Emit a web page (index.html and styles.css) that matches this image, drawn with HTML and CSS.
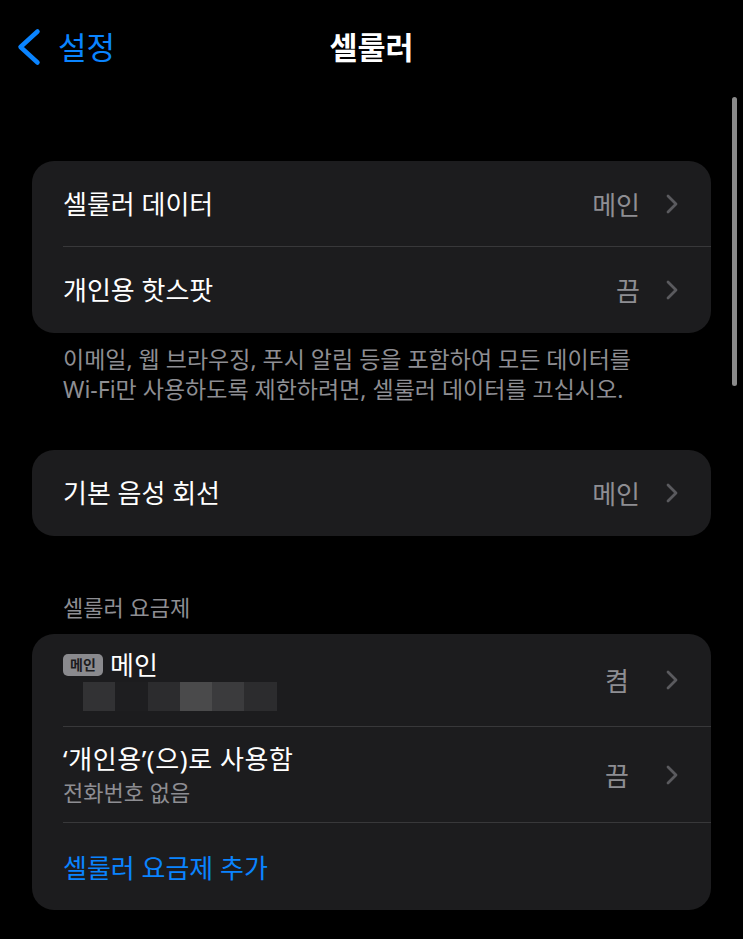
FILE: index.html
```html
<!DOCTYPE html>
<html lang="ko">
<head>
    <meta charset="UTF-8">
    <meta name="viewport" content="width=device-width, initial-scale=1.0">
    <title>셀룰러</title>
    <link rel="stylesheet" href="styles.css">
</head>
<body>
    <div class="screen">
        <header class="nav">
            <a class="back" href="#">
                <svg width="26" height="40" viewBox="0 0 26 40"><polyline points="21.5,4.5 4.5,20 21.5,35.5" fill="none" stroke="#0a84ff" stroke-width="4.5" stroke-linecap="round" stroke-linejoin="round"/></svg>
                <span>설정</span>
            </a>
            <h1 class="title">셀룰러</h1>
            <div></div>
        </header>

        <div class="scrollbar"></div>

        <main class="content">
            <section class="group first">
                <div class="row">
                    <div class="row-body">
                        <span class="label">셀룰러 데이터</span>
                        <span class="value">메인</span>
                        <svg class="chev" width="12" height="20" viewBox="0 0 12 20"><polyline points="2,2 10,10 2,18" fill="none" stroke="#5a5a5e" stroke-width="2.8" stroke-linecap="round" stroke-linejoin="round"/></svg>
                    </div>
                </div>
                <div class="row">
                    <div class="row-body">
                        <span class="label">개인용 핫스팟</span>
                        <span class="value">끔</span>
                        <svg class="chev" width="12" height="20" viewBox="0 0 12 20"><polyline points="2,2 10,10 2,18" fill="none" stroke="#5a5a5e" stroke-width="2.8" stroke-linecap="round" stroke-linejoin="round"/></svg>
                    </div>
                </div>
            </section>
            <p class="footnote">이메일, 웹 브라우징, 푸시 알림 등을 포함하여 모든 데이터를<br>Wi-Fi만 사용하도록 제한하려면, 셀룰러 데이터를 끄십시오.</p>

            <section class="group second">
                <div class="row">
                    <div class="row-body">
                        <span class="label">기본 음성 회선</span>
                        <span class="value">메인</span>
                        <svg class="chev" width="12" height="20" viewBox="0 0 12 20"><polyline points="2,2 10,10 2,18" fill="none" stroke="#5a5a5e" stroke-width="2.8" stroke-linecap="round" stroke-linejoin="round"/></svg>
                    </div>
                </div>
            </section>

            <h2 class="section-title">셀룰러 요금제</h2>
            <section class="group plans">
                <div class="row">
                    <div class="row-body plan">
                        <div class="stack">
                            <div class="plan-name"><span class="badge">메인</span><span class="label">메인</span></div>
                            <div class="redacted">
                                <i class="px1"></i><i class="px2"></i><i class="px3"></i><i class="px4"></i><i class="px5"></i><i class="px3"></i>
                            </div>
                        </div>
                        <span class="value">켬</span>
                        <svg class="chev" width="12" height="20" viewBox="0 0 12 20"><polyline points="2,2 10,10 2,18" fill="none" stroke="#5a5a5e" stroke-width="2.8" stroke-linecap="round" stroke-linejoin="round"/></svg>
                    </div>
                </div>
                <div class="row">
                    <div class="row-body personal">
                        <div class="stack">
                            <span class="label wide">‘개인용’(으)로 사용함</span>
                            <span class="sub">전화번호 없음</span>
                        </div>
                        <span class="value">끔</span>
                        <svg class="chev" width="12" height="20" viewBox="0 0 12 20"><polyline points="2,2 10,10 2,18" fill="none" stroke="#5a5a5e" stroke-width="2.8" stroke-linecap="round" stroke-linejoin="round"/></svg>
                    </div>
                </div>
                <div class="row">
                    <div class="row-body add">
                        <span class="link">셀룰러 요금제 추가</span>
                    </div>
                </div>
            </section>
        </main>
    </div>
</body>
</html>
```

FILE: styles.css
```css
body {
    margin: 0;
    background-color: #000;
    font-family: "Noto Sans", "Noto Sans CJK KR", sans-serif;
    color: #fff;
}
.screen {
    position: relative;
    width: 743px;
    height: 939px;
    overflow: hidden;
}
.nav {
    display: grid;
    grid-template-columns: 1fr auto 1fr;
    align-items: center;
    height: 94px;
}
.back {
    display: flex;
    align-items: center;
    gap: 16px;
    padding-left: 16px;
    color: #0a84ff;
    text-decoration: none;
    font-size: 31px;
    line-height: 40px;
}
.back svg {
    display: block;
}
.title {
    margin: 0;
    font-size: 30.5px;
    font-weight: 600;
    line-height: 40px;
}
.scrollbar {
    position: absolute;
    left: 732px;
    top: 97px;
    width: 5px;
    height: 289px;
    border-radius: 3px;
    background: #8a8a8a;
}
.content {
    padding: 0 32px;
}
.group {
    background: #1c1c1e;
    border-radius: 22px;
    overflow: hidden;
}
.group.first {
    margin-top: 67px;
}
.row {
    padding-left: 31px;
}
.row-body {
    display: flex;
    align-items: center;
    height: 85px;
    padding-right: 33px;
    border-bottom: 1px solid #38383a;
}
.row:last-child .row-body {
    border-bottom: none;
    height: 86px;
}
.label {
    flex: 1;
    font-size: 26px;
    line-height: 32px;
}
.label.wide {
    letter-spacing: 0.6px;
}
.value {
    margin-right: 26px;
    font-size: 26px;
    color: #8e8e93;
}
.plans .value {
    margin-right: 37px;
}
.chev {
    display: block;
}
.footnote {
    margin: 11px 0 46px;
    padding-left: 31px;
    font-size: 23px;
    line-height: 30px;
    color: #8e8e93;
}
.section-title {
    margin: 56px 0 12px;
    padding-left: 31px;
    font-size: 22px;
    font-weight: 400;
    line-height: 30px;
    color: #8e8e93;
}
.stack {
    flex: 1;
    display: flex;
    flex-direction: column;
}
.row-body.plan {
    height: 92px;
}
.row-body.personal {
    height: 95px;
}
.row:last-child .row-body.add {
    height: 87px;
}
.plan-name {
    display: flex;
    align-items: center;
    height: 32px;
}
.badge {
    display: inline-block;
    width: 40px;
    height: 22px;
    margin-right: 7px;
    border-radius: 5px;
    background: #8a8a8e;
    color: #1c1c1e;
    font-size: 14px;
    font-weight: 700;
    line-height: 22px;
    text-align: center;
}
.redacted {
    display: flex;
    margin: 1px 0 0 20px;
    height: 29px;
}
.redacted i {
    width: 32.3px;
    height: 29px;
}
.px1 { background: #323234; }
.px2 { background: #1e1e20; }
.px3 { background: #2c2c2e; }
.px4 { background: #4a4a4b; }
.px5 { background: #3b3b3d; }
.sub {
    margin-top: 3px;
    font-size: 22px;
    line-height: 28px;
    color: #8e8e93;
}
.link {
    font-size: 26px;
    color: #0a84ff;
}
```
